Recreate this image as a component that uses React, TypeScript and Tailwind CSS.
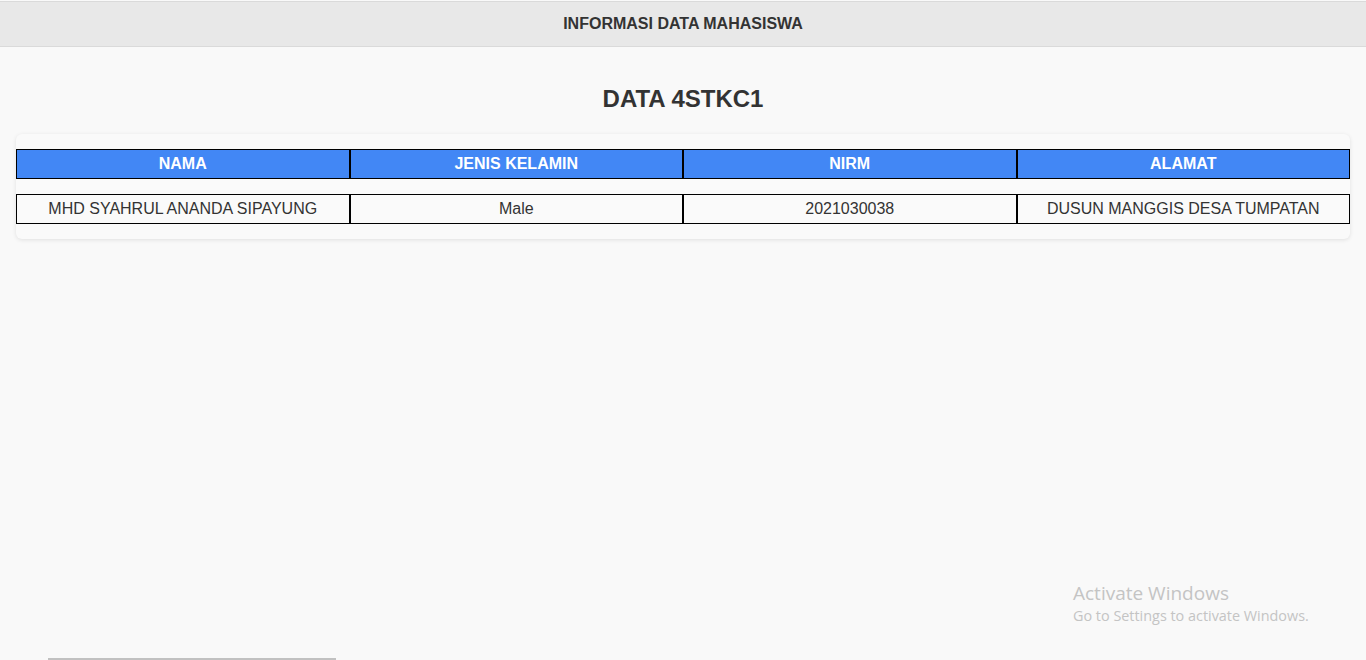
const rows = [
  {
    nama: 'MHD SYAHRUL ANANDA SIPAYUNG',
    jenisKelamin: 'Male',
    nirm: '2021030038',
    alamat: 'DUSUN MANGGIS DESA TUMPATAN',
  },
];

const columns = ['NAMA', 'JENIS KELAMIN', 'NIRM', 'ALAMAT'];

export default function App() {
  return (
    <div className="relative min-h-[660px] bg-[#f9f9f9] text-[#333333] font-['Liberation_Sans',Arial,sans-serif] overflow-hidden">
      <header className="mt-px h-[46px] bg-[#e8e8e8] border-t border-b border-[#dadada] flex items-center justify-center">
        <h1 className="text-[16px] font-bold text-[#333333]">INFORMASI DATA MAHASISWA</h1>
      </header>

      <main className="px-4">
        <h2 className="pt-[39px] pb-[22px] text-center text-[24px] leading-[26px] font-bold text-[#333333]">
          DATA 4STKC1
        </h2>

        <div className="bg-[#fafafa] rounded-md shadow-[0_1px_4px_rgba(0,0,0,0.10)]">
          <table className="w-full table-fixed border-separate border-spacing-x-0 border-spacing-y-[15px]">
            <thead>
              <tr>
                {columns.map(col => (
                  <th
                    key={col}
                    className="bg-[#4287f5] border border-black text-white text-[16px] leading-[18px] font-bold py-[5px] text-center"
                  >
                    {col}
                  </th>
                ))}
              </tr>
            </thead>
            <tbody>
              {rows.map(row => (
                <tr key={row.nirm}>
                  <td className="border border-black text-[16px] leading-[18px] py-[5px] text-center">{row.nama}</td>
                  <td className="border border-black text-[16px] leading-[18px] py-[5px] text-center">{row.jenisKelamin}</td>
                  <td className="border border-black text-[16px] leading-[18px] py-[5px] text-center">{row.nirm}</td>
                  <td className="border border-black text-[16px] leading-[18px] py-[5px] text-center">{row.alamat}</td>
                </tr>
              ))}
            </tbody>
          </table>
        </div>
      </main>

      {/* windows watermark */}
      <div className="absolute left-[1073px] top-[580px] text-[#c4c4c4] font-['Open_Sans','Noto_Sans',sans-serif] pointer-events-none">
        <p className="text-[19px] leading-[26px]">Activate Windows</p>
        <p className="text-[14.4px] leading-[20px]">Go to Settings to activate Windows.</p>
      </div>

      {/* scrollbar thumb */}
      <div className="absolute bottom-0 left-[48px] w-[288px] h-[2px] bg-[#c1c1c1]" />
    </div>
  );
}
